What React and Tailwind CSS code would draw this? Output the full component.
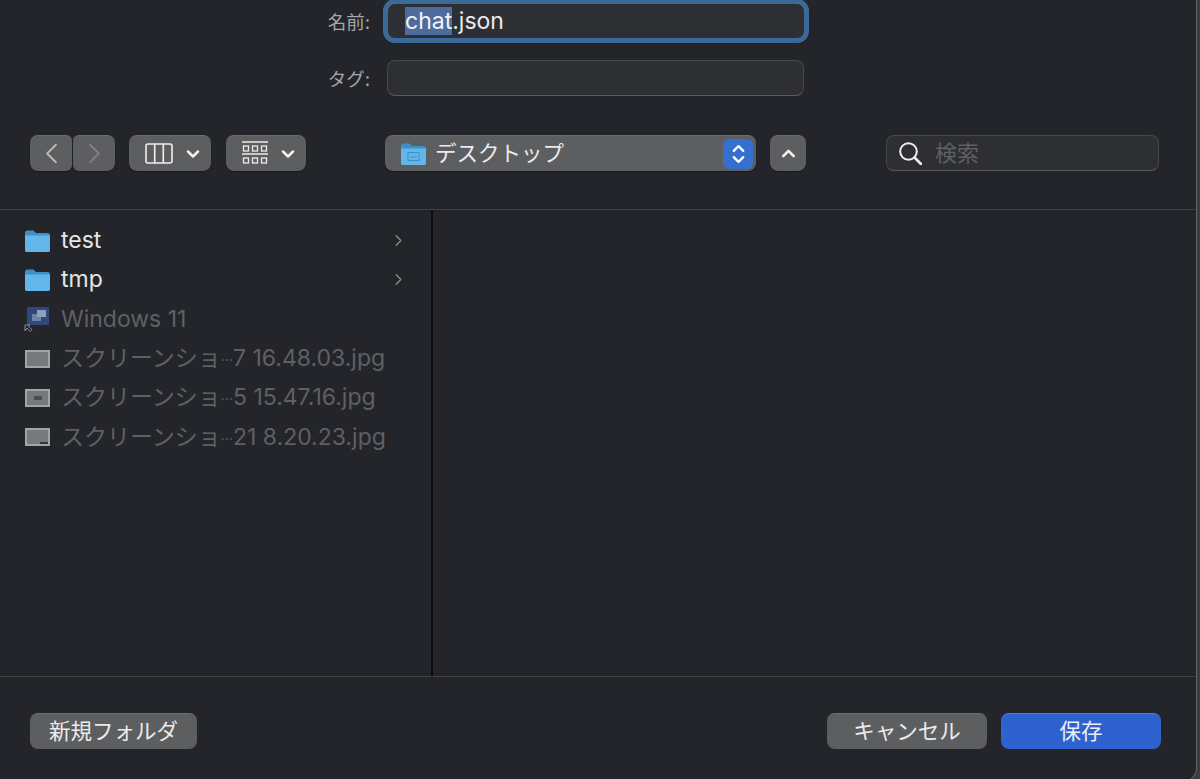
import { ChevronLeft, ChevronRight, ChevronDown, ChevronUp } from 'lucide-react';

const font = "font-['Inter','Noto_Sans_CJK_JP',sans-serif]";

function Folder({ small }) {
  return (
    <svg width="27" height="24" viewBox="0 0 27 24" className="shrink-0">
      <path d="M1 4 Q1 1.5 3.5 1.5 H9.5 L12 4 H24 Q26 4 26 6.5 V21 Q26 23 24 23 H3 Q1 23 1 21 Z" fill="#3f8fca" />
      <path d="M1 6.5 H26 V21 Q26 23 24 23 H3 Q1 23 1 21 Z" fill="#62b6ea" />
      {small && <rect x="8" y="10.5" width="11" height="8" fill="none" stroke="#3f8fc4" strokeWidth="1" />}
      {small && <rect x="10.5" y="14.5" width="6" height="1" fill="#3f8fc4" />}
    </svg>
  );
}

function Thumb({ variant }) {
  return (
    <div className="relative ml-[1px] flex h-[18px] w-[25px] shrink-0 items-center justify-center border-2 border-[#a2a4a5] bg-[#77797b]">
      {variant === 'dot' && <div className="h-1 w-2 bg-[#4a4b4c]" />}
      {variant === 'corner' && <div className="absolute right-0 bottom-0 h-[2px] w-2 bg-[#34353a]" />}
    </div>
  );
}

function AliasIcon() {
  return (
    <svg width="27" height="26" viewBox="0 0 27 26" className="shrink-0">
      <rect x="3" y="1" width="22" height="18" rx="1" fill="#2f4a78" />
      <rect x="8" y="8" width="9" height="7" fill="#6d84a6" />
      <rect x="13" y="4" width="9" height="7" fill="#8fa0b8" />
      <path d="M1 25 V19 H6 L4.5 20.5 L8 23.5 L6 25.5 L3 22 Z" fill="#24252a" stroke="#a2a3a5" strokeWidth="0.8" />
    </svg>
  );
}

function SidebarRow({ icon, label, tail, arrow, dim }) {
  return (
    <div className="flex h-[39.3px] items-center pl-6 pr-[23px]">
      <div className="flex w-[37px] shrink-0 items-center">{icon}</div>
      <span className={`flex-1 text-[23px] leading-none whitespace-nowrap ${dim ? 'text-[#5f6064]' : 'text-[#e4e5e6]'}`}>
        {label}
        {tail && <span className="align-[5px] text-[14px]">…</span>}
        {tail}
      </span>
      {arrow && <ChevronRight size={19} strokeWidth={1.6} className="text-[#8a8b8e]" />}
    </div>
  );
}

function ToolButton({ className = '', children }) {
  return (
    <div className={`flex h-9 items-center justify-center rounded-lg border-t border-[#6d6e70] bg-[#5d5e60] shadow-[0_1px_1px_rgba(0,0,0,0.35)] ${className}`}>
      {children}
    </div>
  );
}

function FormRow({ label, className, children }) {
  return (
    <div className={`flex items-center ${className}`}>
      <span className="w-[370px] shrink-0 pt-[3px] text-right text-[18.5px] text-[#a6a7a9]">{label}</span>
      {children}
    </div>
  );
}

export default function App() {
  return (
    <div className={`h-[779px] w-[1200px] overflow-hidden bg-[#3c3d41] ${font}`}>
      <div className="flex h-[782px] w-[1197px] flex-col rounded-br-[14px] border-r border-b border-[#626367] bg-[#24252a]">
        {/* top form + toolbar */}
        <div className="h-[210px] shrink-0 border-b border-[#3f4044]">
          <FormRow label="名前:" className="-mt-[2px] h-[46px]">
            <div className="ml-[13px] flex h-[44px] w-[426px] items-center rounded-[12px] border-[5px] border-[#3c6a98] bg-[#2e2f33] pl-[17px]">
              <span className="bg-[#4d6c9d] text-[23px] leading-[28px] text-[#f2f3f4]">chat</span>
              <span className="text-[23px] leading-[28px] text-[#e9eaeb]">.json</span>
            </div>
          </FormRow>
          <FormRow label="タグ:" className="mt-[16px] h-9">
            <div className="ml-[17px] h-9 w-[417px] rounded-lg border border-[#47484c] border-b-[#5a5b5f] bg-[#2e2f33]" />
          </FormRow>
          <div className="mt-[39px] flex h-9 items-center pl-[30px]">
            <ToolButton className="w-[42px] rounded-r-md">
              <ChevronLeft size={35} strokeWidth={1.3} className="text-[#b8b9ba]" />
            </ToolButton>
            <ToolButton className="ml-[1px] w-[42px] rounded-l-md">
              <ChevronRight size={35} strokeWidth={1.3} className="text-[#808183]" />
            </ToolButton>
            <ToolButton className="ml-[14px] w-[82px] gap-[10px] pl-[8px]">
              <svg width="28" height="21" viewBox="0 0 28 21" fill="none" stroke="#f0f0f0" strokeWidth="1.6">
                <rect x="1" y="1" width="26" height="19" rx="2" />
                <path d="M9.7 1 V20 M18.3 1 V20" />
              </svg>
              <ChevronDown size={20} strokeWidth={3} className="text-[#f0f0f0]" />
            </ToolButton>
            <ToolButton className="ml-[15px] w-[80px] gap-[10px] pl-[8px]">
              <svg width="26" height="25" viewBox="0 0 26 25" fill="none" stroke="#ececec" strokeWidth="1.3">
                <path d="M0 1 H26 M0 13 H26" />
                <rect x="1.5" y="5" width="5" height="5" /><rect x="10.5" y="5" width="5" height="5" /><rect x="19.5" y="5" width="5" height="5" />
                <rect x="1.5" y="17" width="5" height="5" /><rect x="10.5" y="17" width="5" height="5" /><rect x="19.5" y="17" width="5" height="5" />
              </svg>
              <ChevronDown size={20} strokeWidth={3} className="text-[#f0f0f0]" />
            </ToolButton>
            <ToolButton className="ml-[79px] w-[371px] justify-start pl-[15px] pr-[3px]">
              <Folder small />
              <span className="ml-[8px] flex-1 text-[21.5px] leading-none text-[#ebebec]">デスクトップ</span>
              <div className="flex h-[30px] w-[30px] flex-col items-center justify-center rounded-md bg-[#3570d0]">
                <ChevronUp size={19} strokeWidth={2.8} className="-mb-[4px] text-white" />
                <ChevronDown size={19} strokeWidth={2.8} className="-mt-[4px] text-white" />
              </div>
            </ToolButton>
            <ToolButton className="ml-[14px] w-9">
              <ChevronUp size={21} strokeWidth={3} className="text-[#f0f0f0]" />
            </ToolButton>
            <div className="ml-[80px] flex h-9 w-[273px] items-center rounded-lg border border-[#47484c] border-b-[#5a5b5f] bg-[#2e2f33] pl-[12px]">
              <svg width="23" height="23" viewBox="0 0 23 23" fill="none" stroke="#eeeeee" className="shrink-0" strokeLinecap="round">
                <circle cx="9.5" cy="9.5" r="8.3" strokeWidth="2" />
                <path d="M15.5 15.5 L22 22" strokeWidth="2.6" />
              </svg>
              <span className="ml-[13px] text-[22px] leading-none text-[#5f6064]">検索</span>
            </div>
          </div>
        </div>

        {/* sidebar + empty column */}
        <div className="flex h-[467px] shrink-0 border-b border-[#3f4044]">
          <div className="w-[433px] shrink-0 border-r-2 border-[#0c0c0d] pt-[11px]">
            <SidebarRow icon={<Folder />} label="test" arrow />
            <SidebarRow icon={<Folder />} label="tmp" arrow />
            <SidebarRow icon={<AliasIcon />} label="Windows 11" dim />
            <SidebarRow icon={<Thumb />} label="スクリーンショ" tail="7 16.48.03.jpg" dim />
            <SidebarRow icon={<Thumb variant="dot" />} label="スクリーンショ" tail="5 15.47.16.jpg" dim />
            <SidebarRow icon={<Thumb variant="corner" />} label="スクリーンショ" tail="21 8.20.23.jpg" dim />
          </div>
          <div className="flex-1" />
        </div>

        {/* footer buttons */}
        <div className="flex items-start pl-[30px] pr-[35px] pt-9">
          <div className="flex h-9 w-[167px] items-center justify-center rounded-lg border-t border-[#6d6e70] bg-[#5d5e60] text-[21.5px] leading-none text-[#ebebec]">新規フォルダ</div>
          <div className="ml-auto flex h-9 w-[160px] items-center justify-center rounded-lg border-t border-[#6d6e70] bg-[#5d5e60] text-[21.5px] leading-none text-[#ebebec]">キャンセル</div>
          <div className="ml-[14px] flex h-9 w-[160px] items-center justify-center rounded-lg border-t border-[#4a80de] bg-[#2f62cf] text-[21.5px] leading-none text-[#e8eef8]">保存</div>
        </div>
      </div>
    </div>
  );
}
